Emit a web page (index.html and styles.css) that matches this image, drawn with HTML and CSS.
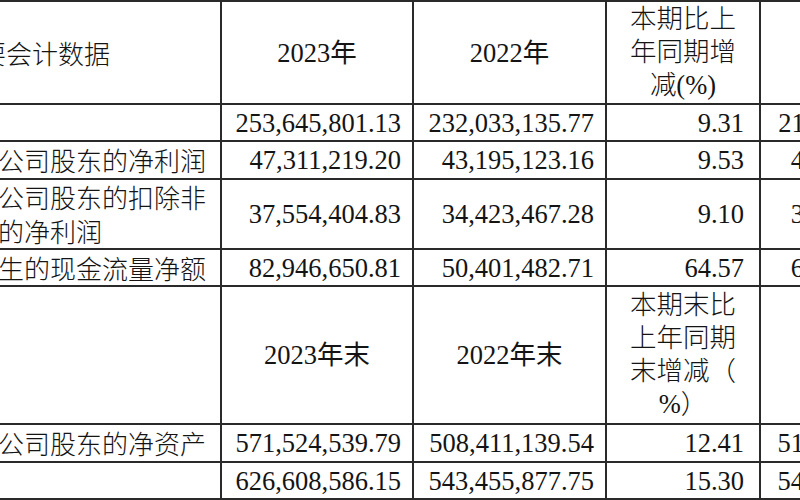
FILE: index.html
```html
<!DOCTYPE html>
<html lang="zh-CN">
<head>
<meta charset="utf-8">
<title>主要会计数据</title>
<link rel="stylesheet" href="styles.css">
</head>
<body>
<table class="report">
  <tbody>
    <tr class="r-103">
      <td class="label head-label">主要会计数据</td>
      <td class="head">2023年</td>
      <td class="head">2022年</td>
      <td class="head pct-head">本期比上<br>年同期增<br>减(%)</td>
      <td class="head">2021年</td>
    </tr>
    <tr class="r-37">
      <td class="label">营业收入</td>
      <td class="num">253,645,801.13</td>
      <td class="num">232,033,135.77</td>
      <td class="num pct">9.31</td>
      <td class="num last">211,931,648.35</td>
    </tr>
    <tr class="r-38">
      <td class="label">归属于上市公司股东的净利润</td>
      <td class="num">47,311,219.20</td>
      <td class="num">43,195,123.16</td>
      <td class="num pct">9.53</td>
      <td class="num last">41,276,102.58</td>
    </tr>
    <tr class="r-70">
      <td class="label">归属于上市公司股东的扣除非经常性损益的净利润</td>
      <td class="num">37,554,404.83</td>
      <td class="num">34,423,467.28</td>
      <td class="num pct">9.10</td>
      <td class="num last">32,871,504.16</td>
    </tr>
    <tr class="r-37">
      <td class="label">经营活动产生的现金流量净额</td>
      <td class="num">82,946,650.81</td>
      <td class="num">50,401,482.71</td>
      <td class="num pct">64.57</td>
      <td class="num last">61,215,372.90</td>
    </tr>
    <tr class="r-138">
      <td class="label head-label"></td>
      <td class="head">2023年末</td>
      <td class="head">2022年末</td>
      <td class="head pct-head">本期末比<br>上年同期<br>末增减（<br>%）</td>
      <td class="head">2021年末</td>
    </tr>
    <tr class="r-38">
      <td class="label">归属于上市公司股东的净资产</td>
      <td class="num">571,524,539.79</td>
      <td class="num">508,411,139.54</td>
      <td class="num pct">12.41</td>
      <td class="num last">516,302,841.27</td>
    </tr>
    <tr class="r-37">
      <td class="label">总资产</td>
      <td class="num">626,608,586.15</td>
      <td class="num">543,455,877.75</td>
      <td class="num pct">15.30</td>
      <td class="num last">548,917,230.64</td>
    </tr>
  </tbody>
</table>
</body>
</html>
```

FILE: styles.css
```css
html, body {
  margin: 0;
  padding: 0;
  background: #ffffff;
  overflow: hidden;
}

body {
  width: 800px;
  height: 500px;
}

.report {
  margin-left: -158px;
  border-collapse: separate;
  border-spacing: 0;
  table-layout: fixed;
  width: 1111px;
  border-top: 2px solid #2a2a2a;
  border-left: 2px solid #2a2a2a;
  font-family: "Liberation Serif", "Noto Sans CJK SC", serif;
  font-size: 26.5px;
  line-height: 34px;
  color: #141414;
}

.report td {
  box-sizing: border-box;
  border-right: 2px solid #2a2a2a;
  border-bottom: 2px solid #2a2a2a;
  padding: 0;
  vertical-align: middle;
  white-space: normal;
}

.report td:nth-child(1) { width: 378px; }
.report td:nth-child(2) { width: 192px; }
.report td:nth-child(3) { width: 193px; }
.report td:nth-child(4) { width: 154px; }
.report td:nth-child(5) { width: 192px; }

.r-103 td { height: 103px; }
.r-37 td { height: 37px; }
.r-38 td { height: 38px; }
.r-70 td { height: 70px; }
.r-138 td { height: 138px; }

.report .label {
  font-family: "Noto Sans CJK SC", sans-serif;
  font-weight: 300;
  font-size: 26px;
  text-align: left;
  padding: 0 8px 0 24px;
}

.report .head-label {
  text-align: center;
  padding: 0;
}

.report .head {
  text-align: center;
}

.report .pct-head {
  line-height: 33px;
  font-weight: 300;
}

.report .num {
  text-align: right;
  padding-right: 11px;
  white-space: nowrap;
}

.report .num.pct {
  padding-right: 15px;
}

.report .num.last {
  padding-right: 8px;
}
```
